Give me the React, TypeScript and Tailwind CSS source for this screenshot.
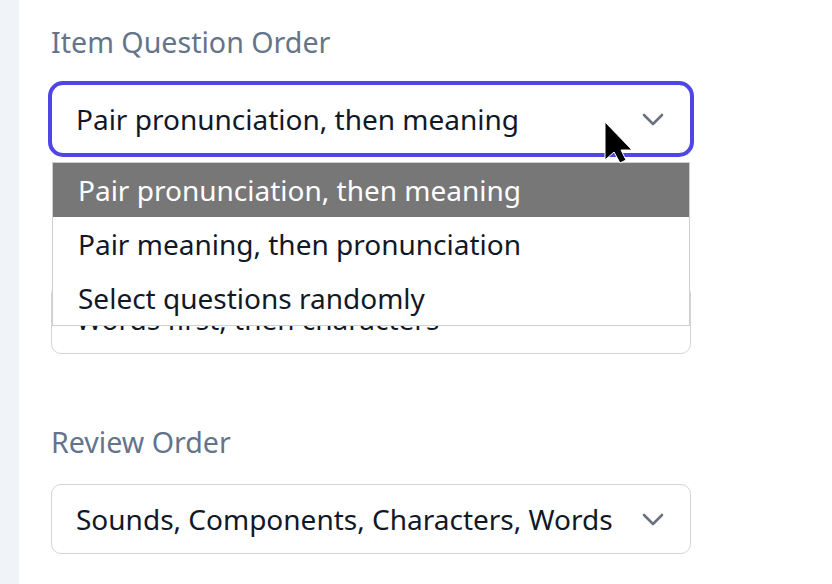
import { useState } from 'react'

type Section = {
  label: string
  value: string
}

const sections: Section[] = [
  { label: 'Item Question Order', value: 'Pair pronunciation, then meaning' },
  { label: 'Character Order', value: 'Words first, then characters' },
  { label: 'Review Order', value: 'Sounds, Components, Characters, Words' },
]

const options = [
  'Pair pronunciation, then meaning',
  'Pair meaning, then pronunciation',
  'Select questions randomly',
]

const Chevron = () => (
  <svg width="22" height="13" viewBox="0 0 22 13" fill="none" className="shrink-0">
    <path d="M2 2l9 9 9-9" stroke="#6b7280" strokeWidth="2.6" strokeLinecap="round" strokeLinejoin="round" />
  </svg>
)

const Cursor = () => (
  <svg
    width="30"
    height="44"
    viewBox="0 0 30 44"
    className="pointer-events-none absolute left-[604px] top-[121px] z-20"
  >
    <polygon
      points="1,1 1,39 10,31 16,42 22,39 17,29 28,29"
      fill="#000"
      stroke="#fff"
      strokeWidth="1"
    />
  </svg>
)

export default function App() {
  const [active] = useState(0)

  return (
    <div className="relative flex min-h-screen bg-white font-['Noto_Sans',sans-serif]">
      <aside className="w-[19px] shrink-0 bg-[#f0f4f9]" />
      <main className="flex-1 pl-[32px] pt-[24px]">
        {sections.map((section, index) => (
          <div key={section.label} className={index === 0 ? '' : 'mt-[70px]'}>
            <p className="h-[36px] text-[28.6px] leading-[36px] text-[#64748b]">{section.label}</p>
            <div className="relative mt-[24px] w-[640px]">
              <div
                className={`flex h-[70px] items-center justify-between rounded-[10px] border-[1.5px] border-[#d1d5db] bg-white pl-[24px] pr-[26px] ${
                  index === 0 ? 'outline outline-[4px] outline-offset-[-1px] outline-[#4f46e5] rounded-[12px]' : ''
                }`}
              >
                <span className="text-[28px] text-[#111827]">{section.value}</span>
                <Chevron />
              </div>
              {index === 0 && (
                <ul className="absolute left-[1px] top-[78px] z-10 w-[638px] border border-[#cfcfcf] bg-white">
                  {options.map((option, i) => (
                    <li
                      key={option}
                      className={`flex h-[54px] items-center pl-[25px] text-[28px] ${
                        i === active ? 'bg-[#777777] text-white' : 'text-[#111827]'
                      }`}
                    >
                      {option}
                    </li>
                  ))}
                </ul>
              )}
            </div>
          </div>
        ))}
      </main>
      <Cursor />
    </div>
  )
}
